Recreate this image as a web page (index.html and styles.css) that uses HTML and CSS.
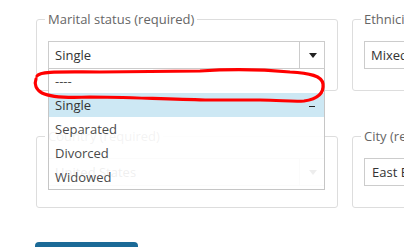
FILE: index.html
```html
<!DOCTYPE html>
<html lang="en">
<head>
  <meta charset="UTF-8" />
  <meta name="viewport" content="width=device-width, initial-scale=1.0" />
  <title>Profile details</title>
  <link rel="stylesheet" href="styles.css">
</head>
<body>
  <main class="form">
    <div class="grid">
      <fieldset class="field open">
        <legend>Marital status (required)</legend>
        <div class="select-wrap">
          <div class="select"><span class="value">Single</span><span class="caret"></span></div>
          <ul class="options">
            <li>----</li>
            <li class="selected">Single<span class="tick"></span></li>
            <li>Separated</li>
            <li>Divorced</li>
            <li>Widowed</li>
          </ul>
        </div>
      </fieldset>

      <fieldset class="field">
        <legend>Ethnicity (required)</legend>
        <div class="select"><span class="value">Mixed / multiple</span><span class="caret"></span></div>
      </fieldset>

      <fieldset class="field">
        <legend>Country (required)</legend>
        <div class="select"><span class="value">United States</span><span class="caret"></span></div>
      </fieldset>

      <fieldset class="field">
        <legend>City (required)</legend>
        <input class="text-input" type="text" value="East Boston">
      </fieldset>
    </div>

    <button class="save-btn">Save</button>
  </main>

  <!-- hand drawn annotation -->
  <svg class="scribble" width="404" height="247" viewBox="0 0 404 247">
    <path d="M37,76 C40,71 60,72 100,72 L200,71 C230,69 268,70 290,72 C310,73 322,76 323,84 C324,93 318,99 304,101 C292,102 280,100 260,100 L205,100 C160,99 120,97 90,97 C70,98 50,97 42,93 C36,90 34,84 36,79"
      fill="none" stroke="#f00" stroke-width="3.2" stroke-linecap="round" stroke-linejoin="round"/>
  </svg>
</body>
</html>
```

FILE: styles.css
```css
* {
  box-sizing: border-box;
}

body {
  margin: 0;
  padding: 9px 0 0 36px;
  width: 404px;
  height: 247px;
  overflow: hidden;
  background: #fff;
  font-family: 'Open Sans', 'Noto Sans', sans-serif;
  font-size: 13px;
  color: #333;
  position: relative;
}

.grid {
  display: grid;
  grid-template-columns: 302px 302px;
  column-gap: 14px;
  row-gap: 35px;
}

.field {
  margin: 0;
  min-width: 0;
  border: 1px solid #ddd;
  border-radius: 3px;
  padding: 12px 12px 21px 11px;
}

.field legend {
  font-size: 13px;
  line-height: 20px;
  color: #666;
  padding: 0 3px;
  margin-left: -3px;
}

.field.open {
  position: relative;
  z-index: 2;
}

.select-wrap {
  position: relative;
}

.select {
  display: flex;
  align-items: center;
  height: 28px;
  border: 1px solid #ccc;
  background: #fff;
  white-space: nowrap;
  overflow: hidden;
}

.select .value {
  flex: 1;
  padding-left: 6px;
  overflow: hidden;
}

.caret {
  flex: 0 0 25px;
  height: 100%;
  border-left: 1px solid #ccc;
  display: flex;
  align-items: center;
  justify-content: center;
}

.caret::after {
  content: "";
  border-left: 4.5px solid transparent;
  border-right: 4.5px solid transparent;
  border-top: 5px solid #222;
  margin-left: 1px;
}

.options {
  position: absolute;
  top: 28px;
  left: 0;
  right: 0;
  margin: 0;
  padding: 0;
  list-style: none;
  background: rgba(255, 255, 255, 0.92);
  border: 1px solid #c6c6c6;
  border-top: none;
}

.options li {
  display: flex;
  align-items: center;
  justify-content: space-between;
  height: 24px;
  padding: 0 9px 0 6px;
  color: #4a4a4a;
}

.options li.selected {
  background: #cde8f4;
  color: #333;
}

.tick {
  width: 6px;
  height: 1px;
  background: #222;
  margin-top: 3px;
}

.text-input {
  display: block;
  width: 100%;
  height: 28px;
  border: 1px solid #ccc;
  padding: 0 7px;
  font: inherit;
  color: #333;
}

.save-btn {
  display: block;
  margin: 34px 0 0 -1px;
  width: 103px;
  height: 36px;
  border: none;
  border-radius: 4px;
  background: #1b6a97;
  color: #fff;
  font-family: inherit;
  font-size: 14px;
}

.scribble {
  position: absolute;
  top: 0;
  left: 0;
  pointer-events: none;
  z-index: 5;
}
```
